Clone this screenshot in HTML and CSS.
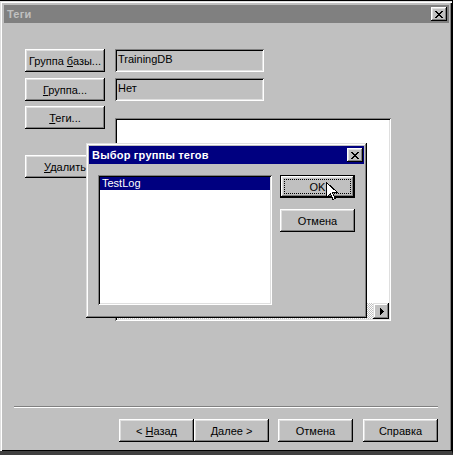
FILE: index.html
```html
<!DOCTYPE html>
<html lang="ru">
<head>
  <meta charset="UTF-8" />
  <title>Теги</title>
  <link rel="stylesheet" href="styles.css">
</head>
<body>
  <div class="window">
    <!-- Title bar (inactive) -->
    <div class="titlebar inactive">
      <span class="title">Теги</span>
      <span class="close-btn">
        <svg width="8" height="7" viewBox="0 0 8 7" shape-rendering="crispEdges">
          <path d="M0 0h2v1h-2zM6 0h2v1h-2zM1 1h2v1h-2zM5 1h2v1h-2zM2 2h4v1h-4zM3 3h2v1h-2zM2 4h4v1h-4zM1 5h2v1h-2zM5 5h2v1h-2zM0 6h2v1h-2zM6 6h2v1h-2z" fill="#000"/>
        </svg>
      </span>
    </div>

    <div class="content">
      <div class="form">
        <div class="btn-col">
          <div class="btn btn-first"><span>Группа <u>б</u>азы...</span></div>
          <div class="btn btn-second"><span><u>Г</u>руппа...</span></div>
          <div class="btn btn-third"><span><u>Т</u>еги...</span></div>
          <div class="btn btn-delete"><span><u>У</u>далить</span></div>
        </div>
        <div class="field-col">
          <div class="field">TrainingDB</div>
          <div class="field field-second">Нет</div>
          <div class="tag-list">
            <div class="hscroll">
              <div class="track"></div>
              <div class="arrow-btn">
                <svg width="4" height="7" viewBox="0 0 4 7" shape-rendering="crispEdges">
                  <path d="M0 0h1v7h-1zM1 1h1v5h-1zM2 2h1v3h-1zM3 3h1v1h-1z" fill="#000"/>
                </svg>
              </div>
            </div>
          </div>
        </div>
      </div>

      <div class="footer">
        <div class="separator"></div>
        <div class="wizard-buttons">
          <div class="btn"><span>&lt; <u>Н</u>азад</span></div>
          <div class="btn"><span>Далее &gt;</span></div>
          <div class="btn btn-gap"><span>Отмена</span></div>
          <div class="btn btn-gap"><span>Справка</span></div>
        </div>
      </div>
    </div>

    <!-- Modal dialog -->
    <div class="dialog">
      <div class="titlebar active">
        <span class="title">Выбор группы тегов</span>
        <span class="close-btn">
          <svg width="8" height="7" viewBox="0 0 8 7" shape-rendering="crispEdges">
            <path d="M0 0h2v1h-2zM6 0h2v1h-2zM1 1h2v1h-2zM5 1h2v1h-2zM2 2h4v1h-4zM3 3h2v1h-2zM2 4h4v1h-4zM1 5h2v1h-2zM5 5h2v1h-2zM0 6h2v1h-2zM6 6h2v1h-2z" fill="#000"/>
          </svg>
        </span>
      </div>
      <div class="dialog-body">
        <div class="listbox">
          <div class="list-item selected">TestLog</div>
        </div>
        <div class="dialog-buttons">
          <div class="btn btn-default"><span class="focus">OK</span></div>
          <div class="btn btn-cancel"><span>Отмена</span></div>
        </div>
      </div>
    </div>

    <svg class="cursor" width="12" height="19" viewBox="0 0 12 19" shape-rendering="crispEdges">
      <path d="M0.5 0.5V15.5L4.5 11.5L7 17.5L9 16.5L6.5 10.5H11.5Z" fill="#fff" stroke="#000" stroke-width="1"/>
    </svg>
  </div>
</body>
</html>
```

FILE: styles.css
```css
* {
  box-sizing: border-box;
  margin: 0;
  padding: 0;
}

body {
  font-family: 'Liberation Sans', Arial, sans-serif;
  font-size: 11px;
  color: #000;
  background: #c0c0c0;
  width: 453px;
  height: 455px;
  overflow: hidden;
}

u {
  text-decoration: underline;
  text-underline-offset: 1px;
}

/* Main window */
.window {
  position: relative;
  width: 453px;
  height: 455px;
  background: #c0c0c0;
  display: flex;
  flex-direction: column;
  padding: 4px 3px 0 4px;
  border-top: 1px solid #000;
  border-right: 1px solid #000;
  border-bottom: 4px solid #404040;
  box-shadow: inset 1px 1px #dfdfdf, inset 2px 2px #fff, inset -1px -1px #000, inset -2px 0 #808080;
}

.titlebar {
  height: 18px;
  display: flex;
  align-items: center;
  justify-content: space-between;
  padding: 0 2px 0 3px;
  flex-shrink: 0;
}

.titlebar.inactive {
  background: #808080;
  color: #c0c0c0;
}

.titlebar.active {
  background: #000080;
  color: #fff;
}

.title {
  font-weight: bold;
  font-size: 11px;
  letter-spacing: 0.2px;
}

.close-btn {
  width: 16px;
  height: 14px;
  background: #c0c0c0;
  display: flex;
  align-items: center;
  justify-content: center;
  box-shadow: inset -1px -1px #000, inset 1px 1px #fff, inset -2px -2px #808080, inset 2px 2px #dfdfdf;
}

.content {
  flex: 1;
  display: flex;
  flex-direction: column;
}

.form {
  display: flex;
  padding: 26px 0 0 21px;
}

/* Buttons */
.btn {
  width: 80px;
  height: 23px;
  background: #c0c0c0;
  display: flex;
  align-items: center;
  justify-content: center;
  white-space: nowrap;
  box-shadow: inset -1px -1px #000, inset 1px 1px #fff, inset -2px -2px #808080, inset 2px 2px #dfdfdf;
}

.btn-col {
  display: flex;
  flex-direction: column;
}

.btn-second { margin-top: 6px; }
.btn-third { margin-top: 5px; }
.btn-delete { margin-top: 26px; }

.field-col {
  display: flex;
  flex-direction: column;
  margin-left: 10px;
}

.field {
  width: 149px;
  height: 23px;
  padding: 4px 0 0 3px;
  background: #c0c0c0;
  box-shadow: inset 1px 1px #808080, inset -1px -1px #fff, inset 2px 2px #000, inset -2px -2px #dfdfdf;
}

.field-second { margin-top: 6px; }

.tag-list {
  width: 276px;
  height: 203px;
  margin-top: 17px;
  background: #fff;
  padding: 2px;
  display: flex;
  flex-direction: column;
  justify-content: flex-end;
  box-shadow: inset 1px 1px #808080, inset -1px -1px #fff, inset 2px 2px #000, inset -2px -2px #dfdfdf;
}

.hscroll {
  height: 16px;
  display: flex;
}

.track {
  flex: 1;
  background: repeating-conic-gradient(#fff 0 25%, #c0c0c0 0 50%) 0 0 / 2px 2px;
}

.arrow-btn {
  width: 16px;
  height: 16px;
  background: #c0c0c0;
  display: flex;
  align-items: center;
  justify-content: center;
  padding-left: 1px;
  box-shadow: inset -1px -1px #000, inset 1px 1px #dfdfdf, inset -2px -2px #808080, inset 2px 2px #fff;
}

/* Wizard footer */
.footer {
  margin-top: auto;
  padding: 0 11px 9px 10px;
}

.separator {
  height: 2px;
  border-top: 1px solid #808080;
  border-bottom: 1px solid #fff;
}

.wizard-buttons {
  display: flex;
  justify-content: flex-end;
  margin-top: 11px;
}

.wizard-buttons .btn {
  width: 75px;
}

.wizard-buttons .btn-gap {
  margin-left: 9px;
}

.wizard-buttons .btn-gap:last-child {
  margin-left: 10px;
}

/* Dialog */
.dialog {
  position: absolute;
  left: 86px;
  top: 142px;
  width: 281px;
  height: 175px;
  background: #c0c0c0;
  padding: 3px;
  box-shadow: inset -1px -1px #000, inset 1px 1px #dfdfdf, inset -2px -2px #808080, inset 2px 2px #fff;
}

.dialog .titlebar {
  padding-right: 1px;
}

.dialog-body {
  display: flex;
  padding: 11px 0 0 9px;
  gap: 8px;
}

.listbox {
  width: 174px;
  height: 130px;
  background: #fff;
  padding: 2px;
  box-shadow: inset 1px 1px #808080, inset -1px -1px #fff, inset 2px 2px #000, inset -2px -2px #dfdfdf;
}

.list-item {
  height: 13px;
  line-height: 13px;
  padding-left: 2px;
}

.list-item.selected {
  background: #000080;
  color: #fff;
}

.dialog-buttons {
  display: flex;
  flex-direction: column;
}

.dialog-buttons .btn {
  width: 75px;
}

.btn-default {
  border: 1px solid #000;
  padding: 3px;
}

.focus {
  display: flex;
  align-items: center;
  justify-content: center;
  width: 100%;
  height: 100%;
  border: 1px dotted #000;
}

.btn-cancel {
  margin-top: 11px;
}

.cursor {
  position: absolute;
  left: 326px;
  top: 181px;
}
```
